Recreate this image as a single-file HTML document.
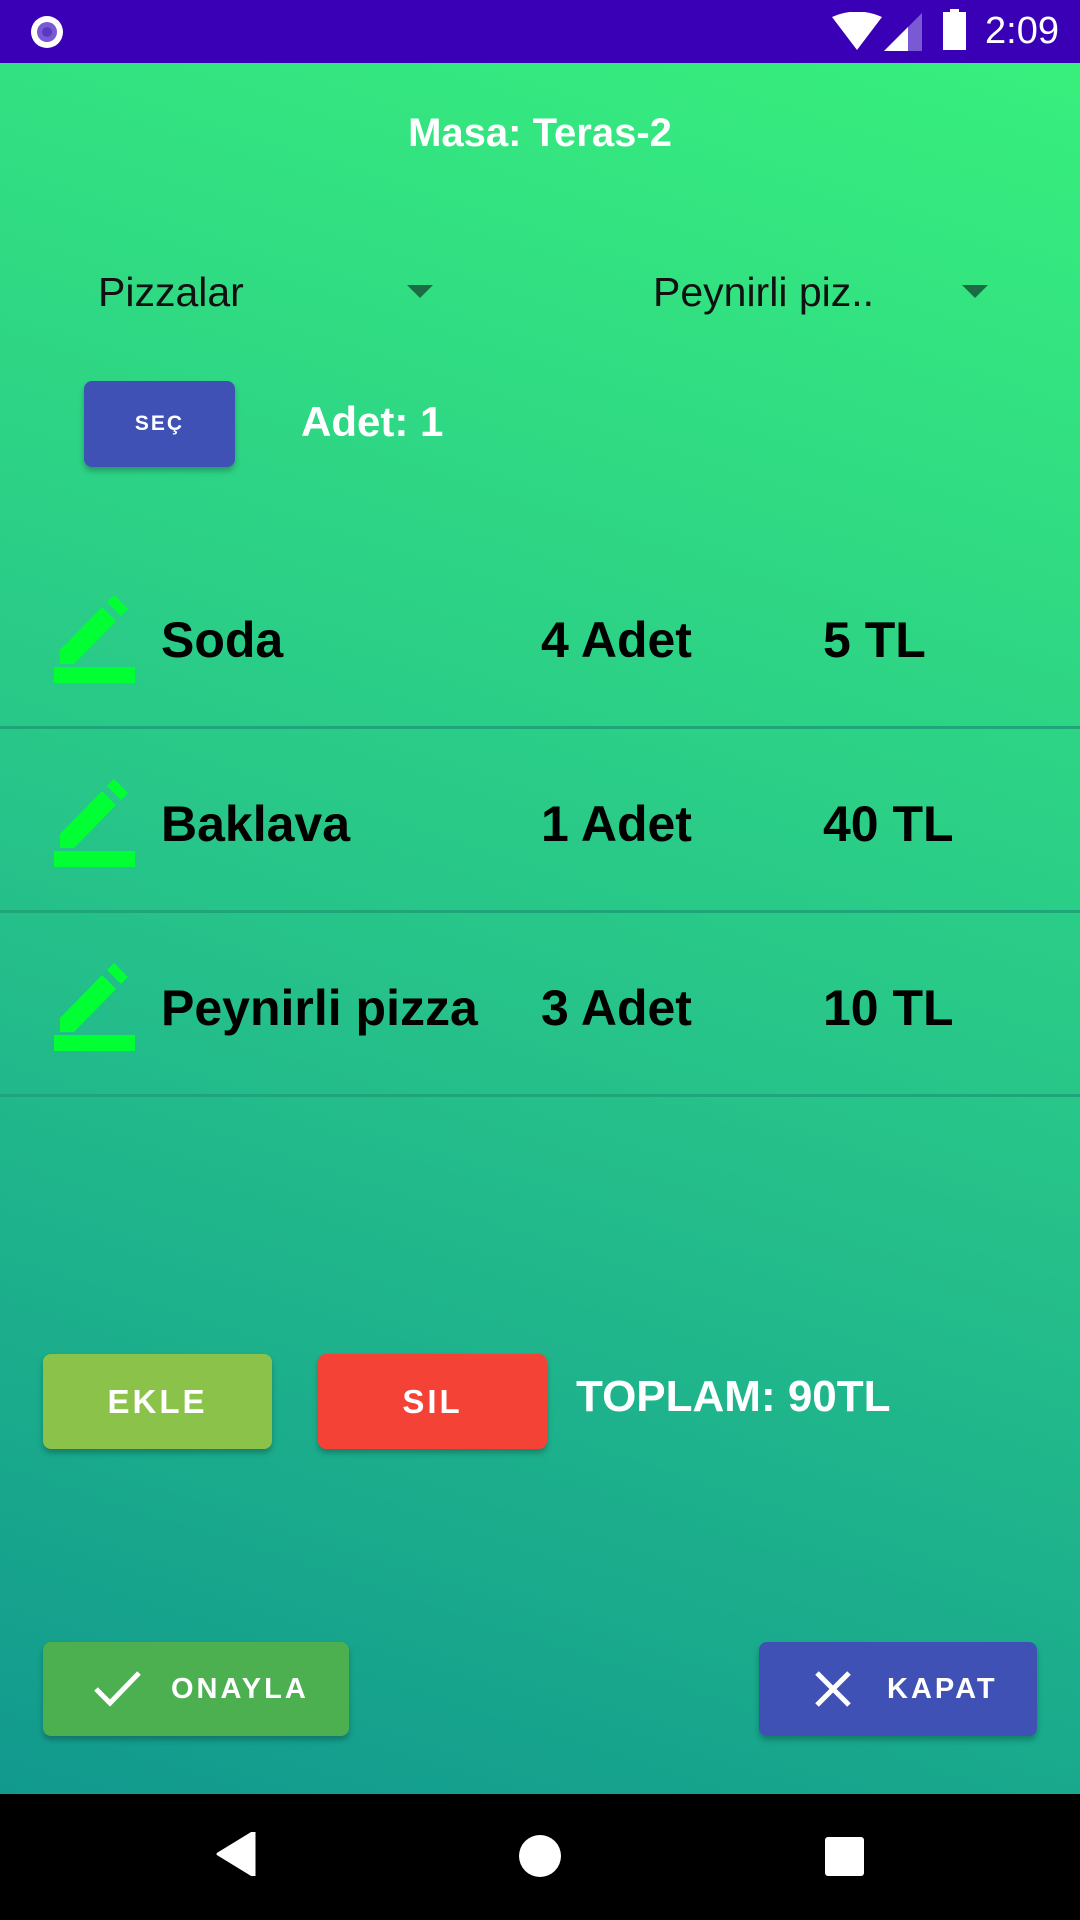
<!DOCTYPE html>
<html><head><meta charset="utf-8"><style>
*{margin:0;padding:0;box-sizing:border-box}
body{width:1080px;height:1920px;position:relative;overflow:hidden;font-family:"Liberation Sans",Roboto,sans-serif}
.sb{position:absolute;left:0;top:0;width:1080px;height:63px;background:#3a00b5}
.main{position:absolute;left:0;top:63px;width:1080px;height:1731px;background:linear-gradient(18deg,#11998e 0%,#26c28a 45%,#38ef7d 100%)}
.nav{position:absolute;left:0;top:1794px;width:1080px;height:126px;background:#000}
.t{position:absolute;white-space:nowrap}
.w{color:#fff;font-weight:bold}
.row{position:absolute;left:0;width:1080px;height:3px;background:#1fa57a}
.it{position:absolute;font-weight:bold;font-size:50px;color:#000;white-space:nowrap;line-height:1}
.btn{position:absolute;border-radius:8px;color:#fff;font-weight:bold;display:flex;align-items:center;justify-content:center;letter-spacing:3px;box-shadow:0 4px 6px rgba(0,0,0,.25)}
.arr{position:absolute;width:0;height:0;border-left:13px solid transparent;border-right:13px solid transparent;border-top:13px solid #1b6b45}
</style></head><body>
<div class="sb">
<svg style="position:absolute;left:28px;top:13px" width="38" height="38"><circle cx="19" cy="19" r="16" fill="#fff"/><circle cx="19" cy="19" r="10" fill="#7a5ad4"/><circle cx="19" cy="19" r="5" fill="#5a3ac0"/></svg>
<svg style="position:absolute;left:832px;top:12px" width="50" height="40"><path d="M0 5 Q25 -6 50 5 L25 38 Z" fill="#fff"/></svg>
<svg style="position:absolute;left:884px;top:13px" width="38" height="38"><path d="M0 38 L38 0 L38 38 Z" fill="#7a5ad4"/><path d="M0 38 L24 14 L24 38 Z" fill="#fff"/></svg>
<div style="position:absolute;left:943px;top:12px;width:23px;height:38px;background:#fff"></div>
<div style="position:absolute;left:950px;top:9px;width:9px;height:5px;background:#fff"></div>
<div class="t" style="left:985px;top:10px;font-size:38px;color:#fff">2:09</div>
</div>
<div class="main">
<div class="t w" style="left:0;width:1080px;text-align:center;top:48px;font-size:40px">Masa: Teras-2</div>
<div class="t" style="left:98px;top:206px;font-size:41px;color:#111">Pizzalar</div>
<div class="arr" style="left:407px;top:222px"></div>
<div class="t" style="left:653px;top:206px;font-size:41px;color:#111">Peynirli piz..</div>
<div class="arr" style="left:962px;top:222px"></div>
<div class="btn" style="left:84px;top:318px;width:151px;height:86px;background:#3f51b5;font-size:21px;letter-spacing:2px">SEÇ</div>
<div class="t w" style="left:301px;top:335px;font-size:42px">Adet: 1</div>

<svg style="position:absolute;left:54px;top:532px" width="82" height="90" viewBox="0 0 82 90"><path d="M6 55 L48 12 L62 26 L20 69 L6 69 Z M53 7 L60 0 L74 14 L67 21 Z" fill="#00ff33"/><rect x="0" y="72" width="81" height="16" fill="#00ff33"/></svg>
<div class="it" style="left:161px;top:552px">Soda</div>
<div class="it" style="left:541px;top:552px">4 Adet</div>
<div class="it" style="left:823px;top:552px">5 TL</div>
<div class="row" style="top:663px"></div>

<svg style="position:absolute;left:54px;top:716px" width="82" height="90" viewBox="0 0 82 90"><path d="M6 55 L48 12 L62 26 L20 69 L6 69 Z M53 7 L60 0 L74 14 L67 21 Z" fill="#00ff33"/><rect x="0" y="72" width="81" height="16" fill="#00ff33"/></svg>
<div class="it" style="left:161px;top:736px">Baklava</div>
<div class="it" style="left:541px;top:736px">1 Adet</div>
<div class="it" style="left:823px;top:736px">40 TL</div>
<div class="row" style="top:847px"></div>

<svg style="position:absolute;left:54px;top:900px" width="82" height="90" viewBox="0 0 82 90"><path d="M6 55 L48 12 L62 26 L20 69 L6 69 Z M53 7 L60 0 L74 14 L67 21 Z" fill="#00ff33"/><rect x="0" y="72" width="81" height="16" fill="#00ff33"/></svg>
<div class="it" style="left:161px;top:920px">Peynirli pizza</div>
<div class="it" style="left:541px;top:920px">3 Adet</div>
<div class="it" style="left:823px;top:920px">10 TL</div>
<div class="row" style="top:1031px"></div>

<div class="btn" style="left:43px;top:1291px;width:229px;height:95px;background:#8bc34a;font-size:33px">EKLE</div>
<div class="btn" style="left:318px;top:1291px;width:229px;height:95px;background:#f44336;font-size:33px">SIL</div>
<div class="t w" style="left:576px;top:1309px;font-size:44px">TOPLAM: 90TL</div>

<div class="btn" style="left:43px;top:1579px;width:306px;height:94px;background:#4caf50;font-size:29px;justify-content:flex-start;padding-left:50px">
<svg width="50" height="40" style="margin-right:28px"><path d="M3 20 L17 34 L46 4" stroke="#fff" stroke-width="5" fill="none"/></svg>ONAYLA</div>
<div class="btn" style="left:759px;top:1579px;width:278px;height:94px;background:#3f51b5;font-size:29px;justify-content:flex-start;padding-left:54px">
<svg width="40" height="40" style="margin-right:34px"><path d="M4 4 L36 36 M36 4 L4 36" stroke="#fff" stroke-width="5"/></svg>KAPAT</div>
</div>
<div class="nav">
<svg style="position:absolute;left:216px;top:38px" width="40" height="44"><path d="M38 0 L38 44 L2 22 Z" fill="#fff" stroke="#fff" stroke-width="3" stroke-linejoin="round"/></svg>
<div style="position:absolute;left:519px;top:41px;width:42px;height:42px;border-radius:50%;background:#fff"></div>
<div style="position:absolute;left:825px;top:43px;width:39px;height:39px;border-radius:3px;background:#fff"></div>
</div>
</body></html>
